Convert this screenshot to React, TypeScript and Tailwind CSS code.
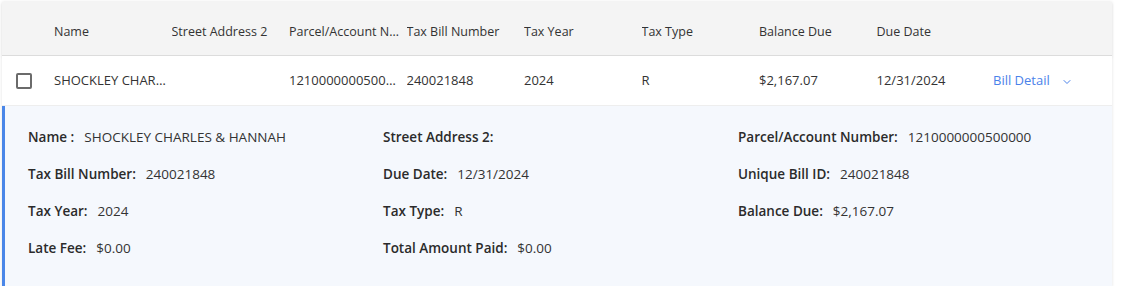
import { ChevronDown } from "lucide-react"

interface Bill {
  name: string
  street2: string
  parcel: string
  billNumber: string
  taxYear: string
  taxType: string
  balance: string
  dueDate: string
}

const bill: Bill = {
  name: "SHOCKLEY CHARLES & HANNAH",
  street2: "",
  parcel: "1210000000500000",
  billNumber: "240021848",
  taxYear: "2024",
  taxType: "R",
  balance: "$2,167.07",
  dueDate: "12/31/2024",
}

const headers = ["Name", "Street Address 2", "Parcel/Account Number", "Tax Bill Number", "Tax Year", "Tax Type", "Balance Due", "Due Date"]

const Cell = ({ children }: { children: React.ReactNode }) => (
  <div className="w-[117.5px] shrink-0 pr-[4px] truncate">{children}</div>
)

const Field = ({ label, value }: { label: string; value: string }) => (
  <div className="flex items-center h-[37px] whitespace-nowrap">
    <span className="font-semibold text-[#2b2b2b]">{label}</span>
    <span className="ml-[10px] text-[#333]">{value}</span>
  </div>
)

const App = () => {
  const cells = [bill.name, bill.street2, bill.parcel, bill.billNumber, bill.taxYear, bill.taxType, bill.balance, bill.dueDate]

  return (
    <div className="bg-white h-[286px] overflow-hidden pt-[2px] pl-[2px] text-[#333]" style={{ fontFamily: '"Open Sans", "Noto Sans", sans-serif' }}>
      <div className="w-[1110px] shadow-[0_0_3px_rgba(0,0,0,0.12)]">
        {/* header */}
        <div className="flex items-center h-[54px] pt-[8px] bg-[#f4f4f4] border-b border-[#dcdcdc] shadow-[0_2px_3px_rgba(0,0,0,0.06)] pl-[52px] text-[12.5px]">
          {headers.map((h) => (
            <Cell key={h}>{h}</Cell>
          ))}
        </div>

        {/* row */}
        <div className="flex items-center h-[50px] pt-[1px] bg-white border-b border-[#eeeeee] pl-[14px] text-[13px]">
          <div className="w-[16px] h-[16px] border-2 border-[#6b6b6b] rounded-[2px] mr-[22px] shrink-0" />
          {cells.map((c, i) => (
            <Cell key={i}>{c}</Cell>
          ))}
          <div className="flex items-center text-[#4a82ea] font-medium -ml-[1px]">
            Bill Detail
            <ChevronDown size={12} strokeWidth={2} className="ml-[11px] mt-[1px]" />
          </div>
        </div>

        {/* expanded detail */}
        <div className="bg-[#f5f8fd] border-l-[3px] border-[#4a86e8] pl-[23px] pt-[13px] pb-[20px] grid grid-cols-[355px_355px_1fr] text-[13.5px]">
          <div className="flex items-center h-[37px] whitespace-nowrap">
            <span className="font-semibold text-[#2b2b2b]">Name :</span>
            <span className="ml-[10px]">{bill.name}</span>
          </div>
          <Field label="Street Address 2:" value="" />
          <Field label="Parcel/Account Number:" value={bill.parcel} />
          <Field label="Tax Bill Number:" value={bill.billNumber} />
          <Field label="Due Date:" value={bill.dueDate} />
          <Field label="Unique Bill ID:" value={bill.billNumber} />
          <Field label="Tax Year:" value={bill.taxYear} />
          <Field label="Tax Type:" value={bill.taxType} />
          <Field label="Balance Due:" value={bill.balance} />
          <Field label="Late Fee:" value="$0.00" />
          <Field label="Total Amount Paid:" value="$0.00" />
          <div />
        </div>
      </div>
    </div>
  )
}

export default App
